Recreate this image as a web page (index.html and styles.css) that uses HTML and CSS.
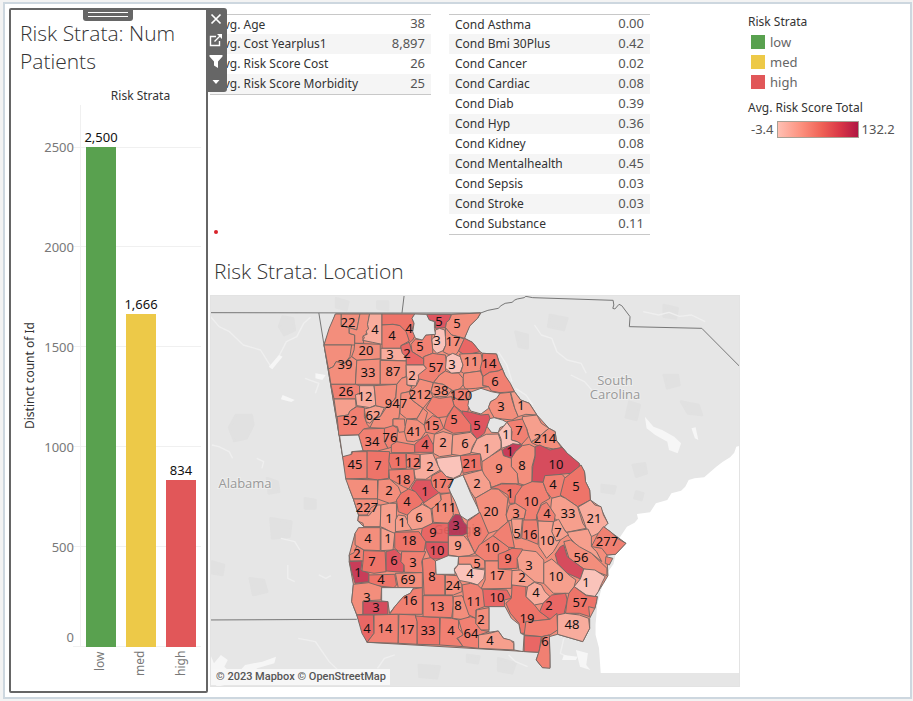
FILE: index.html
```html
<!DOCTYPE html>
<html lang="en">
<head>
<meta charset="utf-8">
<title>Risk Strata</title>
<link rel="stylesheet" href="styles.css">
</head>
<body>
<main class="dashboard">
  <section class="panel">
    <div class="grip"></div>
    <div class="toolbar">
      <button type="button" aria-label="Remove"><svg viewBox="0 0 14 14"><path d="M2.5 2.5l9 9M11.500 2.500l-9 9" stroke-width="1.700"/></svg></button>
      <button type="button" aria-label="Go to sheet"><svg viewBox="0 0 14 14"><path d="M7 3.500H1.500v9h9V8M5.500 8.500L12 2"/><path class="solid" d="M8 1h5v5z"/></svg></button>
      <button type="button" aria-label="Use as filter"><svg viewBox="0 0 14 14"><path class="solid" d="M.5 1h13v1.500L9 7.500V14l-4-2.500v-4L.5 2.500z"/></svg></button>
      <button type="button" aria-label="More options"><svg viewBox="0 0 14 14"><path class="solid" d="M3.500 5h7L7 9z"/></svg></button>
    </div>
    <h2>Risk Strata: Num Patients</h2>
    <div class="chart">
      <div class="chart-head">Risk Strata</div>
      <div class="axis-title">Distinct count of Id</div>
      <div class="ticks">
        <span class="band first">2500</span><span class="band">2000</span><span class="band">1500</span><span class="band">1000</span><span class="band">500</span><span class="band zero">0</span>
      </div>
      <div class="plot">
        <div class="gridlines"><i class="band first"></i><i class="band"></i><i class="band"></i><i class="band"></i><i class="band"></i><i class="band"></i></div>
        <div class="bars">
          <div class="bar-col"><span>2,500</span><div class="bar low" style="height:92.25%"></div></div>
          <div class="bar-col"><span>1,666</span><div class="bar med" style="height:61.480%"></div></div>
          <div class="bar-col"><span>834</span><div class="bar high" style="height:30.770%"></div></div>
        </div>
      </div>
      <div class="cats"><span>low</span><span>med</span><span>high</span></div>
    </div>
  </section>

  <div class="content">
    <div class="tables">
      <table class="avg">
        <tr><th scope="row">Avg. Age</th><td>38</td></tr>
        <tr><th scope="row">Avg. Cost Yearplus1</th><td>8,897</td></tr>
        <tr><th scope="row">Avg. Risk Score Cost</th><td>26</td></tr>
        <tr><th scope="row">Avg. Risk Score Morbidity</th><td>25</td></tr>
      </table>
      <table class="cond">
        <tr><th scope="row">Cond Asthma</th><td>0.00</td></tr>
        <tr><th scope="row">Cond Bmi 30Plus</th><td>0.42</td></tr>
        <tr><th scope="row">Cond Cancer</th><td>0.02</td></tr>
        <tr><th scope="row">Cond Cardiac</th><td>0.08</td></tr>
        <tr><th scope="row">Cond Diab</th><td>0.39</td></tr>
        <tr><th scope="row">Cond Hyp</th><td>0.36</td></tr>
        <tr><th scope="row">Cond Kidney</th><td>0.08</td></tr>
        <tr><th scope="row">Cond Mentalhealth</th><td>0.45</td></tr>
        <tr><th scope="row">Cond Sepsis</th><td>0.03</td></tr>
        <tr><th scope="row">Cond Stroke</th><td>0.03</td></tr>
        <tr><th scope="row">Cond Substance</th><td>0.11</td></tr>
      </table>
      <i class="dot"></i>
    </div>
    <h2 class="map-title">Risk Strata: Location</h2>
    <div class="map">
<svg viewBox="0 0 530 392" role="img" aria-label="Map of Georgia counties">
<rect class="land" width="530" height="392"/>
<g transform="matrix(.345 0 0 .3333 -5 -10)">
<g class="terrain">
<path d="M90 390l45 0 5 30-20 40-35 8-15-40zM225 95l30 5 5 35-30 15-15-25zM380 40l35 10-5 25-30-8zM190 700l60 10-5 45-50 5zM130 880l40 5 10 35-40 10zM290 640l30 5 0 25-30 0zM1230 350l30 10-10 45-30-8zM1330 270l40 0 5 30-35 10zM1000 90l50 10-10 35-45-10zM1150 600l40 5-5 20-35-5zM1240 540l35-5 5 30-30 10zM900 140l35 10 0 40-25-5zM620 1140l60 5-8 35-50-5zM850 1120l50 15-10 30-40-8zM500 50l30 0 0 25-30-5zM1330 60l40 10-5 30-35-5zM180 580l30 10 5 30-30 5zM20 830l35 10-5 30-30-5zM760 1110l35 5-5 20-30-5zM1380 350l50 10 10 30-40-5zM1250 620l20 5-5 20-20-5z"/>
</g>
<g class="rivers">
<path d="M16 95l25 30 30 15 40 40 50 15 30 50 25-35 20-40 30-15 20-40 20-18M1270 80l45 10 30-8 30 12 35-4 40 20M955 120l20 30 30 10 15 40 30 25 40 10 15 30M1060 270l40 20 25 30 60 5M290 280l40 15-10 30M20 480l20 5 30 15 10 20M150 520l20 10-5 20M220 760l40 10 15 25M240 840l0 40 20 10M330 870l20 10 15-8M850 200l25 40 15 50M900 310l30 20 20 30M550 1110l-30 10-20 30M270 1060l50 10 40 60 30 30M880 1110l20 20 35 15M1040 1060l-10 45 20 10"/>
<path class="lake" d="M1275 395l25 30 25 10 35 20 20 20-10 30-25-10-5-25-35-20-25-20zM1410 430l10 30 10 5-8-38zM185 245l30-35 10 5-30 38zM16 1110l10 25 20-25 20 15-10 20 30 30 30-35 50-10 40-15-5 20-50 15-35 35-80 20-20-20zM1075 1095l35 10-5 35 12 15-30-10zM320 265l30 5-10 15-20-5zM1040 1110l40 5-5 10-40 0zM225 330l35 15-10 6-30-8z"/>
</g>
<path class="sea" d="M1560 480l-20 5-6 18-12 14-22 14-18 14-20 18-15 14-28 3-17 5-10 20-12 12-28 8-12 20-33 10-17 27-38 5 3 14-10 12-22 12-14 22-14 22-3 28-8 40-22 32-15 50-10 40-5 60 0 30 10 40 5 75H1560z"/>
<path class="border" d="M16 83L571 84 799 84 820 76 850 70 858 62 870 55 890 52 898 45 905 42 925 38 930 34 950 38 1183 46 1185 60 1182 70 1188 72 1200 58 1208 62 1232 95 1230 125 1440 130 1560 255M577 33L571 84M330 84L345 180 399 512M16 1005L440 1003"/>
<g class="counties">
<polygon class="d" points="378,87 715,88 799,84 790,100 765,125 752,160 775,172 797,200 805,205 845,207 852,230 862,252 870,272 897,320 915,345 940,355 962,390 997,430 1015,440 1018,465 1050,505 1088,540 1100,560 1103,590 1115,615 1117,645 1145,665 1168,715 1155,725 1220,775 1190,808 1165,810 1168,872 1155,895 1130,935 1137,935 1130,970 1115,1000 1115,1030 1095,1070 1022,1048 998,1055 1000,1148 978,1148 960,1125 968,1102 470,1072 440,990 425,950 430,898 418,830 418,810 435,745 460,725 443,708 445,690 430,642 418,610 399,515 345,180"/>
<polygon class="d" points="378,87 395,87 395,122 418,128 418,145 434,150 434,180 345,180 360,130"/>
<polygon class="d" points="395,87 449,87 440,135 418,128 395,122"/>
<polygon class="d" points="449,87 477,87 472,118 474,130 465,150 457,155 460,175 434,175 434,150 418,145 418,128 440,135"/>
<polygon class="b" points="477,87 513,87 513,178 485,172 457,166 462,158 459,152 470,148 467,138 474,132 471,118"/>
<polygon class="f" points="513,87 608,87 600,100 606,115 600,135 610,150 602,165 590,175 585,150 565,122 545,118 513,120"/>
<polygon class="e" points="513,120 545,118 565,122 583,140 592,168 568,182 568,190 513,190"/>
<polygon class="h" points="642,88 715,88 708,105 700,112 697,128 668,130 668,110 650,105"/>
<polygon class="d" points="715,88 799,84 790,100 768,122 752,160 735,155 715,150 705,140 697,128 700,112 708,105"/>
<polygon class="a" points="668,135 680,130 695,135 697,155 700,165 698,180 690,197 672,205 660,192 657,165 665,155"/>
<polygon class="d" points="697,128 715,150 752,162 735,198 728,208 705,208 690,200 698,180 697,155"/>
<polygon class="g" points="752,160 775,172 797,200 775,205 748,207 735,198"/>
<polygon class="e" points="610,162 630,165 640,150 658,148 657,165 660,192 660,205 635,215 634,222 600,200 597,178"/>
<polygon class="g" points="568,182 592,172 600,200 634,222 634,240 583,240 583,215 568,205"/>
<polygon class="d" points="345,180 425,180 420,215 405,235 380,230 372,245 358,252"/>
<polygon class="d" points="434,175 508,178 508,222 440,226 425,215 432,195"/>
<polygon class="b" points="510,190 568,190 572,205 583,215 583,228 510,224"/>
<polygon class="d" points="358,252 372,245 380,230 405,235 425,215 440,226 436,298 365,298"/>
<polygon class="d" points="440,226 508,222 508,298 436,298"/>
<polygon class="d" points="508,226 583,228 583,275 570,280 556,298 508,298"/>
<polygon class="b" points="583,240 634,240 642,250 625,270 615,290 612,303 585,300"/>
<polygon class="e" points="634,215 660,205 672,207 697,210 700,235 697,258 680,270 662,293 620,285 618,270 642,250 634,240"/>
<polygon class="a" points="700,215 718,205 740,215 748,240 740,262 715,265 697,250"/>
<polygon class="d" points="738,207 800,205 805,230 798,258 750,265 742,260 748,240 740,215"/>
<polygon class="f" points="805,205 845,207 852,230 862,252 850,258 825,262 805,275 798,250 803,230"/>
<polygon class="e" points="805,275 825,262 850,258 862,252 870,272 885,295 897,320 855,323 830,318 822,305 805,302"/>
<polygon class="d" points="750,265 798,258 805,275 805,302 822,305 785,310 755,312 748,300 748,280"/>
<polygon class="d" points="697,258 715,265 735,264 748,280 748,300 738,312 720,318 690,298 662,293 680,270"/>
<polygon class="e" points="365,298 436,298 448,302 448,325 436,330 438,342 374,342"/>
<polygon class="b" points="448,302 490,302 493,330 495,360 478,368 440,362 436,330 448,325"/>
<polygon class="c" points="374,342 436,342 438,365 420,378 415,390 381,395"/>
<polygon class="e" points="383,395 415,390 420,378 440,365 462,368 462,395 470,418 478,428 460,432 445,450 388,451"/>
<polygon class="c" points="462,372 478,368 495,362 520,368 508,395 490,400 478,415 467,410"/>
<polygon class="d" points="490,302 556,298 553,335 540,360 520,368 495,362 493,330"/>
<polygon class="d" points="556,298 570,280 585,275 585,300 600,305 592,320 570,325 568,345 562,400 545,402 545,425 520,430 478,428 490,402 508,395 525,368 553,340"/>
<polygon class="d" points="568,325 592,320 600,345 632,370 615,400 585,402 565,385"/>
<polygon class="d" points="592,320 612,303 622,282 662,293 655,320 660,335 632,370 600,345"/>
<polygon class="d" points="662,293 690,298 715,315 700,335 670,335 655,320"/>
<polygon class="e" points="715,318 738,312 760,312 768,322 768,345 735,345 720,335"/>
<polygon class="e" points="715,335 735,345 768,345 762,380 745,380 722,362"/>
<polygon class="e" points="660,335 680,340 715,335 722,362 700,395 675,398 640,370"/>
<polygon class="none" points="768,322 800,310 830,320 855,325 850,340 828,350 822,370 800,387 770,378 762,362"/>
<polygon class="d" points="855,325 885,322 890,345 898,370 908,395 890,405 862,402 838,398 828,380 822,365 828,350 845,340"/>
<polygon class="c" points="886,322 897,320 915,345 940,355 962,390 930,388 908,395 898,370"/>
<polygon class="c" points="920,395 962,390 975,415 997,430 960,462 945,470 938,450 932,430 920,410"/>
<polygon class="d" points="997,430 1015,440 1018,465 1035,490 1010,492 985,487 960,480 945,472 960,462"/>
<polygon class="e" points="885,408 920,402 932,430 938,455 918,478 905,470 888,465 890,440 875,410"/>
<polygon class="none" points="820,402 838,398 862,405 875,412 868,422 855,428 850,443 830,442 818,425"/>
<polygon class="a" points="850,442 865,425 875,412 888,430 888,465 905,470 918,480 892,478 860,490 858,462"/>
<polygon class="j" points="862,495 892,476 920,480 900,500 888,520 865,512"/>
<polygon class="d" points="920,482 940,478 957,487 957,510 948,545 948,590 930,602 908,595 905,565 888,545 888,520 900,500"/>
<polygon class="i" points="957,485 970,480 1000,495 1035,487 1050,505 1085,535 1085,545 1060,565 1030,568 985,575 980,592 948,590 950,545 957,515"/>
<polygon class="d" points="860,492 865,512 888,520 888,545 905,565 908,597 860,595 830,608 825,590 803,570 803,530 825,515"/>
<polygon class="b" points="788,462 815,448 850,447 858,470 858,490 825,515 803,530 798,507 770,502 780,480"/>
<polygon class="h" points="745,378 770,382 800,390 822,388 826,400 815,430 810,445 788,462 772,440 770,418 750,400"/>
<polygon class="f" points="722,362 745,385 770,418 770,440 720,445 692,430 700,400"/>
<polygon class="e" points="640,410 660,392 680,400 692,430 665,447 640,442 635,425"/>
<polygon class="d" points="615,400 632,370 645,382 635,420 612,412"/>
<polygon class="d" points="585,402 615,405 635,420 640,440 625,462 605,470 585,468 578,440 580,425"/>
<polygon class="d" points="545,402 578,402 580,425 578,440 562,442 558,425 545,422"/>
<polygon class="e" points="520,430 545,422 558,430 556,470 540,487 530,490 520,470 515,440"/>
<polygon class="e" points="445,450 460,432 520,430 520,470 530,490 500,498 458,497"/>
<polygon class="none" points="390,452 445,450 458,497 425,500 422,514 399,515"/>
<polygon class="e" points="540,480 556,470 608,480 608,503 540,503"/>
<polygon class="g" points="608,478 622,465 645,448 662,480 662,502 608,502"/>
<polygon class="c" points="665,448 690,440 718,448 715,510 680,515 662,505 662,480"/>
<polygon class="c" points="718,450 770,442 788,462 775,485 770,505 740,512 715,508"/>
<polygon class="e" points="399,515 425,508 428,500 470,500 470,580 408,582"/>
<polygon class="f" points="470,498 535,500 532,580 500,585 470,580"/>
<polygon class="f" points="535,505 582,505 584,550 540,552 533,530"/>
<polygon class="e" points="584,505 622,508 624,555 605,552 584,545"/>
<polygon class="b" points="624,508 660,505 675,540 682,555 658,570 640,583 610,582 605,555 624,550"/>
<polygon class="a" points="670,520 740,512 748,550 740,570 720,580 700,575 682,555 675,540"/>
<polygon class="f" points="740,512 798,507 800,540 803,555 770,560 748,565"/>
<polygon class="e" points="533,555 605,552 608,585 590,612 575,605 535,582"/>
<polygon class="d" points="408,582 500,585 500,642 430,642 418,610"/>
<polygon class="d" points="502,585 535,582 560,605 568,625 555,650 535,655 500,642"/>
<polygon class="h" points="597,610 612,585 655,585 660,605 680,622 635,655 625,640 608,620"/>
<polygon class="f" points="590,612 610,620 632,650 620,665 585,690 560,680 555,645 568,625"/>
<polygon class="e" points="658,572 685,558 700,575 720,582 705,605 712,624 680,625 660,605 655,585"/>
<polygon class="none" points="720,582 748,570 770,625 797,682 760,706 740,692 725,650 712,624 705,605"/>
<polygon class="c" points="748,570 803,555 810,570 825,590 830,612 783,640 770,620"/>
<polygon class="d" points="783,640 830,612 850,612 878,640 873,690 880,708 850,735 822,745 800,700"/>
<polygon class="f" points="828,608 860,597 900,597 920,602 915,625 900,632 898,655 882,655 878,630 850,612"/>
<polygon class="e" points="900,632 920,602 948,590 980,592 990,620 1000,640 975,655 962,690 960,705 925,708 925,700 930,675 898,655"/>
<polygon class="e" points="980,592 985,572 1035,568 1045,580 1030,635 1005,640 990,620"/>
<polygon class="f" points="1060,565 1090,540 1100,560 1103,590 1115,615 1117,645 1080,665 1045,640 1030,630 1042,580"/>
<polygon class="c" points="1005,640 1030,633 1045,640 1080,665 1095,715 1105,730 1048,742 1020,705 1012,700 1002,670"/>
<polygon class="b" points="1082,666 1117,645 1130,660 1148,665 1155,690 1168,715 1140,745 1120,755 1105,730 1095,700"/>
<polygon class="e" points="975,660 990,652 1002,670 1015,690 1012,712 965,708 962,690"/>
<polygon class="d" points="882,660 900,655 930,675 925,700 895,705 877,708 873,690"/>
<polygon class="c" points="1010,710 1025,703 1045,740 1055,748 1030,765 1015,768 1005,740"/>
<polygon class="d" points="430,642 500,642 500,655 480,670 470,690 445,690"/>
<polygon class="c" points="445,692 475,692 500,660 510,660 508,725 460,725 458,715 443,708"/>
<polygon class="c" points="510,660 535,655 555,655 555,690 552,745 545,745 520,730 508,725"/>
<polygon class="c" points="560,690 580,693 600,735 552,740 552,705"/>
<polygon class="c" points="600,675 630,658 655,672 660,715 630,730 600,735 587,715 587,690"/>
<polygon class="d" points="632,655 680,622 685,645 665,665 655,672"/>
<polygon class="d" points="658,672 685,645 683,628 712,624 720,690 705,715 662,712"/>
<polygon class="k" points="725,688 740,690 750,712 760,722 760,745 745,752 705,752 705,715"/>
<polygon class="e" points="760,710 797,682 822,745 795,785 782,805 760,755"/>
<polygon class="c" points="705,752 750,752 765,770 782,805 765,812 735,815 705,810"/>
<polygon class="g" points="630,730 660,715 705,715 705,772 640,770 625,755"/>
<polygon class="h" points="640,772 705,772 705,822 655,822 640,790"/>
<polygon class="d" points="445,728 508,728 508,797 460,795 435,780 435,745"/>
<polygon class="c" points="510,728 550,745 545,795 510,797"/>
<polygon class="f" points="550,742 620,740 640,770 635,800 560,798 550,790"/>
<polygon class="e" points="440,783 460,795 460,828 420,828 418,810 432,803"/>
<polygon class="j" points="418,830 455,828 452,855 475,865 475,890 435,895 425,860"/>
<polygon class="f" points="460,797 522,799 525,860 490,865 455,858 458,828"/>
<polygon class="h" points="525,800 550,793 570,810 568,830 577,840 575,862 525,858"/>
<polygon class="e" points="570,800 640,800 628,830 632,863 578,862 577,840 568,830"/>
<polygon class="e" points="630,823 655,818 668,828 670,865 695,870 695,930 635,930 632,860"/>
<polygon class="none" points="668,828 705,812 735,815 733,840 723,850 725,868 670,868"/>
<polygon class="d" points="735,815 800,812 810,820 812,850 775,850 770,838 735,838"/>
<polygon class="a" points="735,838 770,838 775,850 812,855 808,880 790,900 770,893 730,885 730,870 722,855"/>
<polygon class="e" points="835,752 880,785 882,798 860,805 850,828 812,828 782,805 795,780"/>
<polygon class="e" points="880,708 890,750 897,788 880,787 835,752 850,735"/>
<polygon class="c" points="888,702 920,702 915,760 900,762 892,745"/>
<polygon class="e" points="922,705 962,705 968,740 965,778 935,765 918,760"/>
<polygon class="c" points="965,708 1010,710 1005,740 1018,768 1030,765 1010,800 990,820 968,785"/>
<polygon class="f" points="850,808 870,800 890,790 920,792 920,815 905,820 905,850 850,852"/>
<polygon class="e" points="1140,745 1155,725 1175,740 1195,760 1220,775 1190,808 1165,810 1150,790 1120,785"/>
<polygon class="c" points="1050,742 1110,732 1120,755 1120,785 1135,800 1150,830 1120,805 1080,785 1055,755"/>
<polygon class="d" points="1040,770 1060,765 1085,785 1120,805 1150,835 1165,850 1165,872 1130,858 1098,852 1055,820"/>
<polygon class="i" points="1015,808 1030,785 1040,780 1050,815 1098,852 1088,882 1050,865 1022,835"/>
<polygon class="e" points="1162,815 1182,820 1172,840 1160,835"/>
<polygon class="a" points="1098,852 1130,855 1160,875 1150,895 1140,920 1130,935 1105,930 1070,905 1088,882"/>
<polygon class="c" points="905,820 920,795 960,800 982,825 982,895 950,890 910,855"/>
<polygon class="c" points="982,835 1005,822 1025,840 1055,870 1075,885 1070,905 1055,925 1010,925 982,895"/>
<polygon class="c" points="888,857 915,855 955,890 935,905 915,910 888,900"/>
<polygon class="b" points="935,905 955,892 975,900 985,920 1000,935 980,955 955,960 930,935"/>
<polygon class="d" points="812,828 850,828 850,852 890,855 888,910 800,912 812,885"/>
<polygon class="g" points="795,912 875,915 888,940 868,945 868,965 810,965"/>
<polygon class="f" points="890,900 930,905 930,935 955,960 970,980 1000,1000 985,1005 930,1010 930,1045 915,1045 910,1015 885,985 872,955 888,940"/>
<polygon class="g" points="980,955 1005,930 1045,925 1050,945 1040,990 1000,1003 970,980"/>
<polygon class="e" points="930,1010 1000,1003 1020,985 1022,1035 1000,1050 975,1055 925,1050"/>
<polygon class="g" points="925,1052 975,1055 968,1102 925,1100"/>
<polygon class="e" points="978,1055 998,1050 1000,1110 1000,1150 978,1148 960,1125 968,1100"/>
<polygon class="f" points="1055,925 1070,905 1105,932 1137,935 1135,950 1130,970 1112,965 1115,995 1085,985 1045,985 1050,945"/>
<polygon class="b" points="1022,990 1045,985 1085,990 1112,1000 1115,1030 1095,1070 1022,1048"/>
<polygon class="none" points="823,965 870,965 888,1000 910,1018 915,1045 925,1050 922,1100 895,1095 895,1070 865,1060 850,1038 823,1042"/>
<polygon class="f" points="475,870 550,868 555,900 548,908 475,900"/>
<polygon class="d" points="552,865 630,863 630,908 560,908"/>
<polygon class="d" points="430,898 475,893 512,905 510,945 458,948 458,988 440,990 425,950"/>
<polygon class="none" points="512,908 605,908 595,925 575,935 550,965 535,985 530,950 512,948"/>
<polygon class="i" points="458,950 530,950 530,988 458,988"/>
<polygon class="e" points="603,912 630,908 630,988 535,988 550,965 575,935 595,925"/>
<polygon class="g" points="440,990 488,990 490,1045 470,1072 455,1045"/>
<polygon class="e" points="490,990 560,988 560,1075 470,1072 490,1045"/>
<polygon class="e" points="562,988 610,990 615,1010 615,1078 560,1075"/>
<polygon class="f" points="610,993 680,998 680,1080 615,1078 615,1010"/>
<polygon class="e" points="632,932 718,932 720,960 715,998 632,995"/>
<polygon class="d" points="697,870 730,872 745,900 745,920 720,930 697,930"/>
<polygon class="d" points="720,935 745,932 765,970 770,990 755,1005 718,1000"/>
<polygon class="e" points="682,998 715,1000 735,1005 735,1030 750,1050 730,1060 748,1085 680,1080"/>
<polygon class="e" points="735,1005 770,995 785,1000 785,1015 800,1035 823,1040 795,1050 793,1090 748,1085 732,1060 748,1050"/>
<polygon class="e" points="745,900 770,895 790,900 805,915 810,965 785,975 785,1000 765,990 750,945"/>
<polygon class="d" points="787,975 823,968 823,1035 800,1035 785,1015"/>
<polygon class="c" points="793,1050 825,1045 850,1038 865,1060 885,1065 895,1075 895,1095 793,1090"/>
<polygon class="none" points="608,87 642,88 650,105 665,110 665,130 668,148 640,150 630,165 610,160 602,140 606,115 600,100"/>
</g>
</g>
<g class="place"><text x="35" y="193">Alabama</text><text x="405" y="90">South</text><text x="405" y="104">Carolina</text></g>
<g class="faint"><text x="248" y="239">Georgia</text></g>
<g class="labels">
<text x="138" y="32">22</text><text x="165" y="39">4</text><text x="182" y="45">4</text><text x="199" y="38">4</text><text x="229" y="31">5</text><text x="247" y="33">5</text>
<text x="227" y="50">3</text><text x="243" y="51">17</text><text x="210" y="56">5</text><text x="156" y="60">20</text><text x="180" y="64">3</text><text x="197" y="63">2</text><text x="135" y="74">39</text><text x="158" y="82">33</text><text x="183" y="81">87</text><text x="202" y="85">2</text><text x="226" y="77">57</text><text x="242" y="74">3</text><text x="261" y="71">11</text><text x="279" y="73">14</text><text x="285" y="91">6</text>
<text x="136" y="101">26</text><text x="155" y="106">12</text><text x="210" y="104">212</text><text x="231" y="100">38</text><text x="251" y="105">120</text><text x="186" y="113">947</text><text x="163" y="125">62</text><text x="140" y="130">52</text><text x="291" y="116">3</text><text x="311" y="115">1</text><text x="244" y="129">5</text><text x="267" y="135">5</text><text x="222" y="135">15</text><text x="204" y="141">41</text><text x="180" y="147">76</text><text x="162" y="151">34</text><text x="309" y="140">7</text><text x="296" y="144">1</text><text x="335" y="148">214</text>
<text x="215" y="154">4</text><text x="233" y="152">2</text><text x="255" y="153">6</text><text x="277" y="158">1</text><text x="300" y="161">1</text><text x="145" y="174">45</text><text x="168" y="175">7</text><text x="188" y="171">1</text><text x="203" y="172">12</text><text x="220" y="176">2</text><text x="260" y="173">21</text><text x="289" y="178">9</text><text x="312" y="175">8</text><text x="346" y="174">10</text><text x="193" y="189">18</text><text x="233" y="193">177</text><text x="267" y="193">2</text><text x="343" y="194">4</text><text x="366" y="196">5</text>
<text x="155" y="199">4</text><text x="179" y="200">2</text><text x="215" y="201">1</text><text x="197" y="211">4</text><text x="300" y="203">1</text><text x="321" y="211">10</text><text x="157" y="217">227</text><text x="235" y="217">111</text><text x="281" y="221">20</text><text x="306" y="223">3</text><text x="337" y="223">4</text><text x="358" y="223">33</text><text x="384" y="228">21</text><text x="179" y="228">1</text><text x="192" y="232">1</text><text x="209" y="227">6</text><text x="246" y="235">3</text><text x="223" y="242">9</text><text x="267" y="241">8</text><text x="307" y="243">5</text><text x="320" y="244">16</text><text x="337" y="250">10</text><text x="348" y="242">7</text><text x="397" y="251">277</text>
<text x="158" y="248">4</text><text x="178" y="248">1</text><text x="199" y="250">18</text><text x="227" y="260">10</text><text x="248" y="255">9</text><text x="282" y="257">10</text><text x="371" y="267">56</text><text x="147" y="263">2</text><text x="162" y="271">7</text><text x="184" y="270">6</text><text x="203" y="272">3</text><text x="267" y="273">5</text><text x="298" y="268">9</text><text x="319" y="275">3</text><text x="148" y="282">1</text><text x="171" y="289">4</text><text x="198" y="289">69</text><text x="222" y="286">8</text><text x="260" y="283">4</text><text x="287" y="285">17</text><text x="312" y="287">2</text><text x="346" y="286">10</text><text x="376" y="292">1</text>
<text x="243" y="295">24</text><text x="326" y="302">4</text><text x="157" y="307">3</text><text x="166" y="317">3</text><text x="200" y="310">16</text><text x="227" y="316">13</text><text x="248" y="315">8</text><text x="264" y="311">11</text><text x="287" y="307">10</text><text x="339" y="315">2</text><text x="370" y="312">57</text><text x="317" y="328">19</text><text x="271" y="329">2</text><text x="362" y="334">48</text><text x="157" y="338">4</text><text x="175" y="338">14</text><text x="197" y="339">17</text><text x="218" y="340">33</text><text x="241" y="340">4</text><text x="261" y="343">64</text><text x="280" y="350">4</text><text x="335" y="351">6</text>
</g>
</svg>
      <div class="credit"><a href="#">© 2023 Mapbox</a> <a href="#">© OpenStreetMap</a></div>
    </div>
  </div>

  <aside class="legend">
    <h3>Risk Strata</h3>
    <ul>
      <li><i class="low"></i>low</li>
      <li><i class="med"></i>med</li>
      <li><i class="high"></i>high</li>
    </ul>
    <h3>Avg. Risk Score Total</h3>
    <div class="ramp"><span>-3.4</span><i></i><span>132.2</span></div>
  </aside>
</main>
</body>
</html>
```
FILE: styles.css
```css
* { box-sizing: border-box; }
body {
  margin: 0;
  padding: 2px 1px 2px 3px;
  background: #f3f3f3;
  font: 12px/20px "Noto Sans", "Open Sans", sans-serif;
  color: #333;
}
h2 {
  margin: 0;
  font: 300 21px/28px "Open Sans", "Noto Sans", sans-serif;
  color: #333;
}
h3 { margin: 0; font-size: 12px; font-weight: 400; line-height: 20px; }
.dashboard {
  display: grid;
  grid-template-columns: 199px minmax(0, 1fr) 162px;
  min-height: calc(100vh - 4px);
  padding: 4px 0 4px 4px;
  border: 2px solid #cdd7df;
  background: #fff;
}
.low { background: #59a14f; }
.med { background: #edc948; }
.high { background: #e15759; }

.panel {
  position: relative;
  display: flex;
  flex-direction: column;
  padding: 9px 5px 10px 9px;
  border: 2px solid #666;
  border-radius: 2px;
}
.grip {
  position: absolute;
  top: 0;
  left: 72px;
  width: 50px;
  height: 11px;
  border-radius: 0 0 3px 3px;
  background: linear-gradient(#fff, #fff) 5px 2px / 40px 1px no-repeat,
    linear-gradient(#fff, #fff) 5px 6px / 40px 1px no-repeat, #666;
}
.toolbar {
  position: absolute;
  z-index: 1;
  top: -2px;
  right: -21px;
  width: 21px;
  display: grid;
  grid-auto-rows: 21px;
  border-radius: 0 3px 3px 0;
  background: #666;
}
.toolbar button { padding: 3px; border: 0; background: none; }
.toolbar svg { display: block; width: 14px; height: 14px; fill: none; stroke: #fff; stroke-width: 1.4; }
.toolbar .solid { fill: #fff; stroke: none; }

.chart {
  flex: 1;
  display: grid;
  grid-template-columns: 20px 33px 7px minmax(0, 1fr);
  grid-template-rows: 29px minmax(0, 1fr) 34px;
  margin-top: 1px;
}
.chart-head { grid-area: 1 / 4; padding-top: 10px; text-align: center; }
.axis-title {
  grid-area: 2 / 1;
  writing-mode: vertical-rl;
  transform: rotate(180deg);
  text-align: center;
}
.ticks, .gridlines { display: flex; flex-direction: column; }
.ticks { grid-area: 2 / 2; margin-right: -1px; font-size: 13px; color: #787878; text-align: right; }
.band { flex: 100 0 0; display: flex; align-items: flex-end; justify-content: flex-end; }
.first { flex-grow: 42; }
.ticks .band { transform: translateY(10px); }
.ticks .zero { transform: none; }
.plot { grid-area: 2 / 3 / 3 / 5; display: grid; }
.gridlines { grid-area: 1 / 1; }
.gridlines .band { border-bottom: 1px solid #f0f0f0; }
.bars {
  grid-area: 1 / 1;
  display: grid;
  grid-template-columns: repeat(3, 1fr);
  margin-left: 7px;
  border-left: 1px solid #f0f0f0;
}
.bar-col { display: flex; flex-direction: column; justify-content: flex-end; align-items: center; min-height: 0; }
.bar-col span { font-size: 13px; color: #111; }
.bar { width: 30px; }
.cats { grid-area: 3 / 4; display: grid; grid-template-columns: repeat(3, 1fr); font-size: 12px; color: #787878; }
.cats span {
  writing-mode: vertical-rl;
  transform: rotate(180deg);
  justify-self: center;
  text-align: right;
  padding-bottom: 4px;
}

.content { padding: 6px 8px 0 2px; min-width: 0; }
.tables { position: relative; display: flex; align-items: flex-start; gap: 18px; height: 243px; }
table { border-spacing: 0; border-top: 1px solid #c8c8c8; border-bottom: 1px solid #c8c8c8; }
.avg { width: 221px; }
.cond { width: 201px; }
tr:nth-child(even) { background: #f5f5f5; }
th, td { height: 20px; padding: 0 6px; font-weight: 400; line-height: 20px; }
th { text-align: left; white-space: nowrap; }
td { padding-bottom: 2px; text-align: right; font-size: 13px; line-height: 18px; color: #555; }
tr:first-child th { height: 19px; line-height: 19px; }
tr:first-child td { height: 19px; line-height: 17px; }
.dot { position: absolute; left: 4px; top: 216px; width: 4px; height: 4px; border-radius: 50%; background: #d8232a; }
.map-title { padding-left: 4px; }
.map { position: relative; margin-top: 10px; }
.map svg { display: block; width: 100%; height: auto; }
.map::after {
  content: "";
  position: absolute;
  inset: 0;
  border: 1px solid #e3e3e3;
  pointer-events: none;
}
.land { fill: #e6e6e6; }
.terrain { fill: #e1e1e1; stroke: #e1e1e1; stroke-width: 8; stroke-linejoin: round; }
.rivers path { fill: none; stroke: #efefef; stroke-width: 4; stroke-linejoin: round; }
.rivers .lake { fill: #f6f6f6; stroke: none; }
.sea { fill: #fff; }
.border { fill: none; stroke: #777; stroke-width: 1; vector-effect: non-scaling-stroke; }
.counties polygon { stroke: #776b66; stroke-width: 1; stroke-linejoin: round; vector-effect: non-scaling-stroke; }
.counties .none { fill: #e6e6e6; }
.a { fill: #fac3ba; }
.b { fill: #f8ac9d; }
.c { fill: #f69f8d; }
.d { fill: #f38e7c; }
.e { fill: #f18072; }
.f { fill: #ee7469; }
.g { fill: #e96765; }
.h { fill: #df5560; }
.i { fill: #d64c5d; }
.j { fill: #c83d59; }
.k { fill: #b63a5c; }
.labels, .place, .faint { text-anchor: middle; font-size: 13px; }
.labels { fill: #111; }
.place { fill: #999; font-family: "Open Sans", sans-serif; stroke: #eee; stroke-width: 2; paint-order: stroke; }
.faint { fill: #b5403c; opacity: .3; }
.credit {
  position: absolute;
  left: 0;
  bottom: 2px;
  padding: 0 4px 0 6px;
  background: #f7f7f7;
  font: 500 11px/16px Roboto, "Liberation Sans", sans-serif;
}
.credit a { color: #555; text-decoration: none; }

.legend { padding: 4px 0 0; }
.legend ul { margin: 0 0 6px; padding: 0 0 0 3px; list-style: none; font-size: 13px; color: #666; }
.legend li { display: flex; align-items: center; gap: 5px; height: 20px; }
.legend li i { width: 14px; height: 14px; }
.ramp { display: flex; align-items: center; gap: 3px; padding-left: 3px; font-size: 13px; line-height: 22px; color: #555; }
.ramp i {
  width: 82px;
  height: 17px;
  border: 1px solid #a8a094;
  background: linear-gradient(90deg, #ffc0b3, #fc8f7c 30%, #ef6155 55%, #d93646 78%, #b01743);
}
```
